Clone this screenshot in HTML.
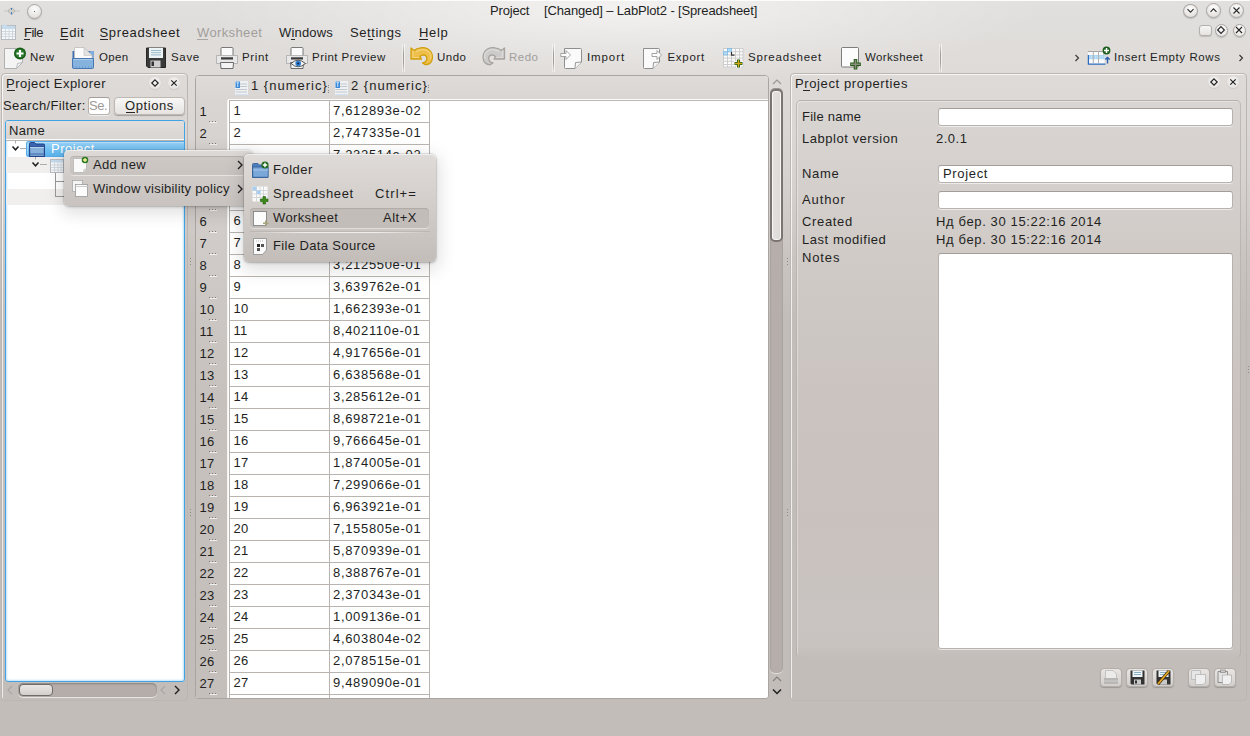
<!DOCTYPE html>
<html><head><meta charset="utf-8"><style>
html,body{margin:0;padding:0;width:1250px;height:736px;overflow:hidden}
body{position:relative;font-family:"Liberation Sans",sans-serif;
 background:radial-gradient(ellipse 420px 75px at 625px 8px,rgba(255,255,255,.6),rgba(255,255,255,.25) 55%,rgba(255,255,255,0) 100%),linear-gradient(to bottom,#e2e0de 0px,#e0dedc 22px,#dedad7 80px,#d7d3d0 172px,#c9c4c0 260px,#c2bdb9 322px,#c2bdb9 736px)}
.tx{position:absolute;white-space:pre;font-family:"Liberation Sans",sans-serif}
.a{position:absolute;box-sizing:border-box}
svg.a{overflow:visible}
.ul{position:absolute;height:1px;background:#2a2625}
.frame{position:absolute;box-sizing:border-box;border:1px solid #bbb6b2;border-radius:4px;box-shadow:inset 1px 1px 0 rgba(255,255,255,.75)}
.inp{position:absolute;box-sizing:border-box;background:#fff;border:1px solid #b7b2ae;border-top-color:#a29d99;border-radius:3px;box-shadow:0 1px 0 rgba(255,255,255,.6)}
.sep{position:absolute;top:44px;width:1px;height:28px;background:linear-gradient(to bottom,rgba(160,155,151,0),#a29d99 35%,#a29d99 65%,rgba(160,155,151,0));box-shadow:-1px 0 0 rgba(255,255,255,.45),1px 0 0 rgba(255,255,255,.6)}
.rbtn{position:absolute;border-radius:50%;box-sizing:border-box;background:radial-gradient(circle at 50% 30%,#fdfdfd 0,#efedeb 45%,#d9d5d2 100%);border:1px solid #a9a5a2;box-shadow:0 1px 1px rgba(0,0,0,.15)}
.cell{position:absolute;box-sizing:border-box;border-right:1px solid #bab5b1;border-bottom:1px solid #bab5b1;background:#fff}
.dots{position:absolute;width:7px;height:1px;background:repeating-linear-gradient(to right,#7e7976 0 1px,transparent 1px 3px);box-shadow:1px 1px 0 rgba(245,244,243,.9)}

</style></head><body>
<!-- title bar -->
<div class="a" style="left:0;top:0;width:1250px;height:1px;background:#fcfcfc"></div>
<svg class="a" style="left:3px;top:5px" width="18" height="12" viewBox="0 0 18 12"><path d="M1 6H17" stroke="#c3c6c8" stroke-width="1"/><path d="M5 6Q8.5 0 12 6Q8.5 12 5 6Z" fill="none" stroke="#aeb3b8" stroke-width="0.9"/><path d="M8.5 3V5M8.5 7V9.5" stroke="#3f7fc0" stroke-width="1.1"/><path d="M6.8 4.5V7.5M10.2 4.5V7.5" stroke="#d4c49a" stroke-width="0.7"/></svg>
<div class="rbtn" style="left:27px;top:4px;width:15px;height:15px"></div>
<div class="a" style="left:33.6px;top:10.5px;width:1.6px;height:1.6px;background:#333;border-radius:1px"></div>
<div class="rbtn" style="left:1183px;top:3.5px;width:15px;height:14.5px"></div>
<div class="rbtn" style="left:1206px;top:3px;width:15px;height:15px"></div>
<div class="rbtn" style="left:1229px;top:3px;width:15px;height:15px"></div>
<svg class="a" style="left:1183px;top:3px" width="15" height="15" viewBox="0 0 15 15"><path d="M4.5 6.2L7.5 9.2L10.5 6.2" stroke="#2b2b2b" stroke-width="1.1" fill="none"/></svg>
<svg class="a" style="left:1206px;top:3px" width="15" height="15" viewBox="0 0 15 15"><path d="M4.5 8.8L7.5 5.8L10.5 8.8" stroke="#2b2b2b" stroke-width="1.1" fill="none"/></svg>
<svg class="a" style="left:1229px;top:3px" width="15" height="15" viewBox="0 0 15 15"><path d="M4.5 4.5L10.5 10.5M10.5 4.5L4.5 10.5" stroke="#2b2b2b" stroke-width="1.1" fill="none"/></svg>
<!-- menubar -->
<svg class="a" style="left:1px;top:24px" width="16" height="17" viewBox="0 0 16 17"><rect x="0.5" y="1.5" width="14" height="14" fill="#f6f8fa" stroke="#b8bcc0"/><rect x="1" y="2" width="13" height="3" fill="#c5dbee"/><rect x="1" y="0.8" width="5" height="1.5" fill="#c5dbee"/><path d="M1 7.5H14M1 10H14M1 12.5H14M4.5 5V15M8 5V15M11.5 5V15" stroke="#c9d2da" stroke-width="0.8"/></svg>
<div class="ul" style="left:24px;top:39px;width:6px"></div>
<div class="ul" style="left:60px;top:39px;width:8px"></div>
<div class="ul" style="left:100px;top:39px;width:8px"></div>
<div class="ul" style="left:197px;top:39px;width:11px;background:#a9a5a2"></div>
<div class="ul" style="left:291px;top:39px;width:4px"></div>
<div class="ul" style="left:368px;top:39px;width:5px"></div>
<div class="ul" style="left:419px;top:39px;width:9px"></div>
<div class="a" style="left:1199px;top:24.5px;width:12.5px;height:11px;border-radius:3px;background:linear-gradient(#f7f6f5,#e6e3e1);border:1px solid #b3afac;box-shadow:0 1px 1px rgba(0,0,0,.15)"></div>
<div class="rbtn" style="left:1214.5px;top:23.5px;width:13px;height:13px;background:radial-gradient(circle at 50% 35%,#fdfdfd,#ebe9e7 70%,#dcd8d5)"></div>
<div class="rbtn" style="left:1232.5px;top:23.5px;width:13px;height:13px;background:radial-gradient(circle at 50% 35%,#fdfdfd,#ebe9e7 70%,#dcd8d5)"></div>
<svg class="a" style="left:1215px;top:24px" width="12" height="12" viewBox="0 0 12 12"><path d="M6 2.6L9.4 6L6 9.4L2.6 6Z" stroke="#222" stroke-width="1.1" fill="none"/></svg>
<svg class="a" style="left:1233px;top:24px" width="12" height="12" viewBox="0 0 12 12"><path d="M3 3L9 9M9 3L3 9" stroke="#222" stroke-width="1.1"/></svg>

<!-- toolbar -->
<!-- New -->
<svg class="a" style="left:4px;top:47px" width="23" height="23" viewBox="0 0 23 23">
<path d="M0.5 1.5H12.5L18.5 7.5V15.5L12.5 21.5H0.5Z" fill="#f4f4f4" stroke="#b0b0b0"/>
<path d="M12.5 21.5L13.5 16.5L18.5 15.5Z" fill="#f2f2f2" stroke="#b0b0b0" stroke-width="0.8"/>
<circle cx="16" cy="6.5" r="6" fill="#175c17"/><circle cx="16" cy="6.5" r="4.6" fill="#2a7a2a"/>
<path d="M16 3V10M12.5 6.5H19.5" stroke="#fff" stroke-width="2.2"/>
</svg>
<!-- Open -->
<svg class="a" style="left:72px;top:47px" width="22" height="22" viewBox="0 0 22 22">
<rect x="0.5" y="4" width="21" height="8" fill="#3e6fb0"/>
<rect x="18" y="4" width="3.5" height="8" fill="#7eaee0"/>
<path d="M2.5 0.5H12L20 8.5V12H2.5Z" fill="#fbfbfb" stroke="#bdbdbd" stroke-width="0.8"/>
<path d="M12 0.5V8.5H20Z" fill="#e3e3e3" stroke="#bdbdbd" stroke-width="0.6"/>
<path d="M0.5 11.5H21.5V20.5Q21.5 21.5 20.5 21.5H1.5Q0.5 21.5 0.5 20.5Z" fill="#86b3de" stroke="#4777b4"/>
<path d="M1.5 12.5H20.5" stroke="#a9cbec"/>
<path d="M1 20H21" stroke="#5b8ec8" stroke-dasharray="1 2"/>
</svg>
<!-- Save -->
<svg class="a" style="left:146px;top:47px" width="21" height="22" viewBox="0 0 21 22">
<path d="M0.5 1H19.5V20.5H2L0.5 19Z" fill="#3a3a3a" stroke="#262626"/>
<rect x="3" y="1" width="14" height="10" fill="#eef3f5"/>
<path d="M5 3.5H15M5 5.7H15M5 7.9H15" stroke="#8fb3c6" stroke-width="0.9"/>
<rect x="4.5" y="13.5" width="10" height="7" fill="#cfcfcf"/>
<rect x="5.5" y="14.5" width="2.5" height="4.5" fill="#333"/>
</svg>
<!-- Print -->
<svg class="a" style="left:216px;top:47px" width="22" height="22" viewBox="0 0 22 22">
<rect x="5" y="0.5" width="12" height="9" rx="1" fill="#fbfbfb" stroke="#6c6c6c" stroke-width="0.9"/>
<path d="M0.5 8.5H21.5V16.5H0.5Z" fill="#e7e7e7" stroke="#aaa" stroke-width="0.8"/>
<rect x="5" y="10.3" width="12" height="2.2" fill="#3a3a3a"/>
<path d="M4.5 15.5H17.5L17 21.5H5Z" fill="#f4f4f4" stroke="#5d5d5d" stroke-width="0.9"/>
</svg>
<!-- Print preview -->
<svg class="a" style="left:286px;top:47px" width="22" height="22" viewBox="0 0 22 22">
<rect x="5" y="0.5" width="12" height="9" rx="1" fill="#fbfbfb" stroke="#6c6c6c" stroke-width="0.9"/>
<path d="M0.5 8.5H21.5V16.5H0.5Z" fill="#e7e7e7" stroke="#aaa" stroke-width="0.8"/>
<rect x="5" y="10.3" width="12" height="2.2" fill="#3a3a3a"/>
<path d="M4.5 15.5H17.5L17 21.5H5Z" fill="#f4f4f4" stroke="#5d5d5d" stroke-width="0.9"/>
<path d="M5 16.5Q12 10 19.5 16.5Q12 23 5 16.5Z" fill="#f2f2f2" stroke="#444" stroke-width="0.9"/>
<circle cx="12.2" cy="16.5" r="2.8" fill="#2f7fd0"/><circle cx="12.2" cy="16.5" r="1.1" fill="#102a50"/>
</svg>
<div class="sep" style="left:403px"></div>
<!-- Undo -->
<svg class="a" style="left:410px;top:46px" width="24" height="20" viewBox="0 0 24 20">
<path d="M1 2L4 4.5C7.5 1.5 13.5 0.8 18 3C22.5 5.5 23.5 11.5 21.5 15.5C20 18 17.5 19 15 18.5L12.5 17C15 16.5 16.5 15 16.8 12.8C17 10.5 15.5 9 13.5 9C12 9 11 9.5 10 10.5L11.5 13L1 13Z" fill="#eebf4a" stroke="#d09f0c" stroke-width="1.3" stroke-linejoin="round"/>
<path d="M3 4.5L3 11.5L9 11.5M6 6C9 3.5 14 2.8 17.5 4.8C20.5 6.5 21.5 10 20.5 13" stroke="#f5d27a" stroke-width="1.2" fill="none"/>
</svg>
<!-- Redo -->
<svg class="a" style="left:482px;top:46px" width="24" height="20" viewBox="0 0 24 20">
<g transform="translate(23.5,0) scale(-1,1)">
<path d="M1 2L4 4.5C7.5 1.5 13.5 0.8 18 3C22.5 5.5 23.5 11.5 21.5 15.5C20 18 17.5 19 15 18.5L12.5 17C15 16.5 16.5 15 16.8 12.8C17 10.5 15.5 9 13.5 9C12 9 11 9.5 10 10.5L11.5 13L1 13Z" fill="#cdcbc9" stroke="#a6a3a0" stroke-width="1.3" stroke-linejoin="round"/>
<path d="M3 4.5L3 11.5L9 11.5M6 6C9 3.5 14 2.8 17.5 4.8C20.5 6.5 21.5 10 20.5 13" stroke="#dddbd9" stroke-width="1.2" fill="none"/>
</g>
</svg>
<div class="sep" style="left:553px"></div>
<!-- Import -->
<svg class="a" style="left:560px;top:47px" width="23" height="23" viewBox="0 0 23 23">
<path d="M4.5 1.5H20.5Q21.5 1.5 21.5 2.5V15L15 21.5H5.5Q4.5 21.5 4.5 20.5Z" fill="#fafafa" stroke="#8e8e8e" stroke-width="1"/>
<path d="M15 21.5L15.5 15.5L21.5 15" fill="#f4f4f4" stroke="#8e8e8e" stroke-width="0.9"/>
<path d="M0.8 6.5H6V3.5L10.5 8L6 12.5V9.5H0.8Z" fill="#fdfdfd" stroke="#9a9a9a" stroke-width="0.9"/>
</svg>
<!-- Export -->
<svg class="a" style="left:642px;top:47px" width="23" height="23" viewBox="0 0 23 23">
<path d="M1.5 1.5H16.5Q17.5 1.5 17.5 2.5V15L11 21.5H2.5Q1.5 21.5 1.5 20.5Z" fill="#fafafa" stroke="#8e8e8e" stroke-width="1"/>
<path d="M11 21.5L11.5 15.5L17.5 15" fill="#f4f4f4" stroke="#8e8e8e" stroke-width="0.9"/>
<path d="M10 6.5H15V3.5L19.5 8L15 12.5V9.5H10Z" fill="#fdfdfd" stroke="#9a9a9a" stroke-width="0.9"/>
</svg>
<!-- Spreadsheet -->
<svg class="a" style="left:722px;top:47px" width="23" height="23" viewBox="0 0 23 23">
<rect x="1" y="1" width="20" height="19" fill="#fbfbfb"/>
<path d="M1.5 1V20M5.5 1V20M9.5 1V20M13.5 1V20M17.5 1V20M21 1V20M1 1.5H21M1 4.7H21M1 7.9H21M1 11.1H21M1 14.3H21M1 17.5H21M1 20H21" stroke="#cdcdcd" stroke-width="1"/>
<rect x="5.5" y="1.5" width="4" height="3.2" fill="#b3dcf5" stroke="#86bde6" stroke-width="0.9"/>
<rect x="1.5" y="4.7" width="4" height="3.2" fill="#b3dcf5" stroke="#86bde6" stroke-width="0.9"/>
<path d="M9.5 5V8.2H12.5" stroke="#333" stroke-width="1.2" fill="none"/>
<path d="M16.5 12V21M12 16.5H21" stroke="#fff" stroke-width="5"/>
<path d="M16.5 12.5V20.5M12.5 16.5H20.5" stroke="#1f5a10" stroke-width="3.2"/>
<path d="M16.5 13V20M13 16.5H20" stroke="#d4a818" stroke-width="1.3"/>
</svg>
<!-- Worksheet -->
<svg class="a" style="left:841px;top:47px" width="23" height="23" viewBox="0 0 23 23">
<rect x="0.5" y="0.5" width="17" height="19.5" rx="1" fill="#fcfcfc" stroke="#6f6f6f" stroke-width="0.9"/>
<path d="M14.5 12V22.5M9.2 17.3H19.8" stroke="#1f5a10" stroke-width="3.6"/>
<path d="M14.5 12.8V21.7M10 17.3H19" stroke="#8d8d80" stroke-width="1.6"/>
</svg>
<div class="sep" style="left:940px"></div>
<svg class="a" style="left:1074px;top:54px" width="6" height="8" viewBox="0 0 6 8"><path d="M1.5 1L4.5 4L1.5 7" stroke="#333" stroke-width="1.1" fill="none"/></svg>
<!-- Insert empty rows -->
<svg class="a" style="left:1087px;top:46px" width="24" height="20" viewBox="0 0 24 20">
<rect x="1" y="5" width="16.5" height="13" fill="#fbfbfb"/>
<rect x="1" y="9" width="17.5" height="4.2" fill="#a6d3f1"/>
<path d="M1.5 10.2H18M1.5 12H18" stroke="#eaf5fc" stroke-width="0.8" stroke-dasharray="1.2 1"/>
<path d="M1 5.5H17.5" stroke="#a3a3a3" stroke-width="1"/>
<path d="M6.3 5.5V17M11.5 5.5V17M16.8 5.5V9" stroke="#b0b0b0" stroke-width="1"/>
<path d="M1.4 9V18.2H18.5" stroke="#2d6cc0" stroke-width="1.3" fill="none"/>
<path d="M20.5 17.5V11.5M18.3 13.6L20.5 11.4L22.7 13.6" stroke="#2a5fb0" stroke-width="1.4" fill="none"/>
<circle cx="19.5" cy="4.5" r="3.9" fill="#1d5e1d"/>
<path d="M19.5 2V7M17 4.5H22" stroke="#fff" stroke-width="1.5"/>
</svg>
<svg class="a" style="left:1238px;top:54px" width="6" height="8" viewBox="0 0 6 8"><path d="M1.5 1L4.5 4L1.5 7" stroke="#333" stroke-width="1.1" fill="none"/></svg>

<!-- left dock -->
<div class="frame" style="left:1px;top:73px;width:187px;height:628px"></div>
<div class="ul" style="left:7px;top:90px;width:8px"></div>
<div class="rbtn" style="left:149px;top:77px;width:12px;height:12px;background:radial-gradient(circle at 50% 40%,#f6f5f4,#e6e3e1 70%,#d9d5d2);border:none;box-shadow:0 1px 1px rgba(0,0,0,.08)"></div>
<div class="rbtn" style="left:168px;top:77px;width:12px;height:12px;background:radial-gradient(circle at 50% 40%,#f6f5f4,#e6e3e1 70%,#d9d5d2);border:none;box-shadow:0 1px 1px rgba(0,0,0,.08)"></div>
<svg class="a" style="left:149px;top:77px" width="12" height="12" viewBox="0 0 12 12"><path d="M6 2.8L9.2 6L6 9.2L2.8 6Z" stroke="#222" stroke-width="1.2" fill="none"/></svg>
<svg class="a" style="left:168px;top:77px" width="12" height="12" viewBox="0 0 12 12"><path d="M3.3 3.3L8.7 8.7M8.7 3.3L3.3 8.7" stroke="#222" stroke-width="1.2"/></svg>
<div class="inp" style="left:87.5px;top:97px;width:22.5px;height:17.5px"></div>
<div class="a" style="left:114px;top:97px;width:71px;height:17.5px;border-radius:4px;background:linear-gradient(#f9f8f7,#e6e3e1);border:1px solid #bdb8b4;box-shadow:0 1px 1px rgba(0,0,0,.25)"></div>
<div class="ul" style="left:126px;top:112px;width:9px"></div>
<!-- tree view -->
<div class="a" style="left:5px;top:120px;width:180px;height:562px;border:1px solid #3fa3e6;border-radius:3px;background:#fff;box-shadow:inset 0 0 2px 1px rgba(80,170,235,.35)"></div>
<div class="a" style="left:6px;top:121px;width:178px;height:18px;background:linear-gradient(#e1dedb,#d8d4d1);border-radius:2px 2px 0 0"></div>
<div class="a" style="left:6px;top:139px;width:178px;height:1px;background:#fbfbfb"></div>
<div class="a" style="left:6px;top:140px;width:178px;height:1px;background:#bab5b1"></div>
<div class="a" style="left:6px;top:157px;width:178px;height:16px;background:#f0efee"></div>
<div class="a" style="left:6px;top:189px;width:178px;height:16px;background:#f0efee"></div>
<!-- selection -->
<div class="a" style="left:26px;top:141px;width:158px;height:16px;border-radius:3px 0 0 3px;background:linear-gradient(#9ad3f6,#6cbdf0 60%,#5cb3ec);border:1px solid #56ace8;border-right:none;box-shadow:inset 1px 1px 0 rgba(255,255,255,.3)"></div>
<!-- tree lines -->
<svg class="a" style="left:6px;top:140px" width="80" height="70" viewBox="0 0 80 70">
<path d="M6.5 6.5L9.5 9.8L12.5 6.5" stroke="#1f1f1f" stroke-width="1.5" fill="none"/>
<path d="M9.5 0V3.5M14 8.5H20" stroke="#b0acaa" stroke-width="1"/>
<path d="M26.5 22.5L29.5 25.8L32.5 22.5" stroke="#1f1f1f" stroke-width="1.5" fill="none"/>
<path d="M29.5 17V19.5M34 24.5H41" stroke="#b0acaa" stroke-width="1"/>
<path d="M49.5 32V57M49.5 32.5H58M49.5 41.5H58M49.5 56.5H58" stroke="#9a9a9a" stroke-width="1"/>
</svg>
<!-- folder icon in tree -->
<svg class="a" style="left:29px;top:142px" width="16" height="15" viewBox="0 0 16 15">
<path d="M0.5 1.5Q0.5 0.5 1.5 0.5H5.5L7 2H14.5Q15.5 2 15.5 3V14.5H0.5Z" fill="#3a64b0" stroke="#1d3d85" stroke-width="0.9"/>
<rect x="0.7" y="4.5" width="14.6" height="9.8" fill="#86b0d9" stroke="#1d3d85" stroke-width="0.9"/>
<path d="M1 5.4H15" stroke="#b7d8f2" stroke-width="1"/>
<path d="M1 12H15" stroke="#3d68ad" stroke-width="1"/>
</svg>
<!-- spreadsheet icon in tree -->
<svg class="a" style="left:50px;top:158px" width="14" height="15" viewBox="0 0 14 15"><rect x="0.5" y="1.5" width="13" height="13" fill="#f6f8fa" stroke="#b8bcc0"/><rect x="1" y="2" width="12" height="2.5" fill="#c5dbee"/><path d="M1 7H13M1 9.5H13M1 12H13M4.5 4.5V14M8 4.5V14M11 4.5V14" stroke="#c9d2da" stroke-width="0.8"/></svg>
<!-- h scrollbar -->
<svg class="a" style="left:6px;top:685px" width="8" height="10" viewBox="0 0 8 10"><path d="M6 1L2 5L6 9" stroke="#aaa6a3" stroke-width="1.2" fill="none"/></svg>
<div class="a" style="left:18px;top:683px;width:139px;height:14px;border-radius:5px;background:#b4adaa;box-shadow:inset 0 1px 2px rgba(0,0,0,.25),0 1px 0 rgba(255,255,255,.6)"></div>
<div class="a" style="left:19px;top:684px;width:34px;height:12px;border-radius:4px;background:linear-gradient(#e9e7e5,#d2cecb);border:1px solid #6f6b69"></div>
<svg class="a" style="left:159px;top:685px" width="8" height="10" viewBox="0 0 8 10"><path d="M6 1L2 5L6 9" stroke="#aaa6a3" stroke-width="1.2" fill="none"/></svg>
<svg class="a" style="left:173px;top:685px" width="8" height="10" viewBox="0 0 8 10"><path d="M2 1L6 5L2 9" stroke="#1f1f1f" stroke-width="1.4" fill="none"/></svg>
<!-- splitter dots -->
<div class="a" style="left:190px;top:258px;width:1px;height:9px;background:repeating-linear-gradient(#8f8a87 0 1px,transparent 1px 3px)"></div>
<div class="a" style="left:190px;top:509px;width:1px;height:9px;background:repeating-linear-gradient(#8f8a87 0 1px,transparent 1px 3px)"></div>
<div class="a" style="left:787px;top:258px;width:1px;height:9px;background:repeating-linear-gradient(#8f8a87 0 1px,transparent 1px 3px)"></div>
<div class="a" style="left:787px;top:509px;width:1px;height:9px;background:repeating-linear-gradient(#8f8a87 0 1px,transparent 1px 3px)"></div>
<div class="a" style="left:1248px;top:366px;width:1px;height:9px;background:repeating-linear-gradient(#8f8a87 0 1px,transparent 1px 3px)"></div>

<!-- spreadsheet -->
<div class="a" style="left:195px;top:75px;width:574px;height:624px;border:1px solid #aaa5a1;border-radius:4px 4px 3px 3px;background:#fff;overflow:hidden">
<div class="a" style="left:0;top:0;width:572px;height:24px;background:linear-gradient(#dedbd8,#d9d5d2)"></div>
<div class="a" style="left:32px;top:23px;width:541px;height:1px;background:#fbfbfb"></div>
<div class="a" style="left:0;top:24px;width:32px;height:600px;background:linear-gradient(#d9d5d2,#c6c1bd 300px,#c4bfbb 600px);border-right:1px solid #f4f3f2"></div>
<div class="a" style="left:33px;top:24px;width:540px;height:1px;background:#bdb8b4"></div>
<div class="a" style="left:33px;top:24px;width:101px;height:23px;border:1px solid #b9b4b0"></div>
<div class="a" style="left:133px;top:24px;width:101px;height:23px;border:1px solid #b9b4b0"></div>
<div class="dots" style="left:13px;top:45px"></div>
<div class="a" style="left:33px;top:46px;width:101px;height:23px;border:1px solid #b9b4b0"></div>
<div class="a" style="left:133px;top:46px;width:101px;height:23px;border:1px solid #b9b4b0"></div>
<div class="dots" style="left:13px;top:67px"></div>
<div class="a" style="left:33px;top:68px;width:101px;height:23px;border:1px solid #b9b4b0"></div>
<div class="a" style="left:133px;top:68px;width:101px;height:23px;border:1px solid #b9b4b0"></div>
<div class="dots" style="left:13px;top:89px"></div>
<div class="a" style="left:33px;top:90px;width:101px;height:23px;border:1px solid #b9b4b0"></div>
<div class="a" style="left:133px;top:90px;width:101px;height:23px;border:1px solid #b9b4b0"></div>
<div class="dots" style="left:13px;top:111px"></div>
<div class="a" style="left:33px;top:112px;width:101px;height:23px;border:1px solid #b9b4b0"></div>
<div class="a" style="left:133px;top:112px;width:101px;height:23px;border:1px solid #b9b4b0"></div>
<div class="dots" style="left:13px;top:133px"></div>
<div class="a" style="left:33px;top:134px;width:101px;height:23px;border:1px solid #b9b4b0"></div>
<div class="a" style="left:133px;top:134px;width:101px;height:23px;border:1px solid #b9b4b0"></div>
<div class="dots" style="left:13px;top:155px"></div>
<div class="a" style="left:33px;top:156px;width:101px;height:23px;border:1px solid #b9b4b0"></div>
<div class="a" style="left:133px;top:156px;width:101px;height:23px;border:1px solid #b9b4b0"></div>
<div class="dots" style="left:13px;top:177px"></div>
<div class="a" style="left:33px;top:178px;width:101px;height:23px;border:1px solid #b9b4b0"></div>
<div class="a" style="left:133px;top:178px;width:101px;height:23px;border:1px solid #b9b4b0"></div>
<div class="dots" style="left:13px;top:199px"></div>
<div class="a" style="left:33px;top:200px;width:101px;height:23px;border:1px solid #b9b4b0"></div>
<div class="a" style="left:133px;top:200px;width:101px;height:23px;border:1px solid #b9b4b0"></div>
<div class="dots" style="left:13px;top:221px"></div>
<div class="a" style="left:33px;top:222px;width:101px;height:23px;border:1px solid #b9b4b0"></div>
<div class="a" style="left:133px;top:222px;width:101px;height:23px;border:1px solid #b9b4b0"></div>
<div class="dots" style="left:13px;top:243px"></div>
<div class="a" style="left:33px;top:244px;width:101px;height:23px;border:1px solid #b9b4b0"></div>
<div class="a" style="left:133px;top:244px;width:101px;height:23px;border:1px solid #b9b4b0"></div>
<div class="dots" style="left:13px;top:265px"></div>
<div class="a" style="left:33px;top:266px;width:101px;height:23px;border:1px solid #b9b4b0"></div>
<div class="a" style="left:133px;top:266px;width:101px;height:23px;border:1px solid #b9b4b0"></div>
<div class="dots" style="left:13px;top:287px"></div>
<div class="a" style="left:33px;top:288px;width:101px;height:23px;border:1px solid #b9b4b0"></div>
<div class="a" style="left:133px;top:288px;width:101px;height:23px;border:1px solid #b9b4b0"></div>
<div class="dots" style="left:13px;top:309px"></div>
<div class="a" style="left:33px;top:310px;width:101px;height:23px;border:1px solid #b9b4b0"></div>
<div class="a" style="left:133px;top:310px;width:101px;height:23px;border:1px solid #b9b4b0"></div>
<div class="dots" style="left:13px;top:331px"></div>
<div class="a" style="left:33px;top:332px;width:101px;height:23px;border:1px solid #b9b4b0"></div>
<div class="a" style="left:133px;top:332px;width:101px;height:23px;border:1px solid #b9b4b0"></div>
<div class="dots" style="left:13px;top:353px"></div>
<div class="a" style="left:33px;top:354px;width:101px;height:23px;border:1px solid #b9b4b0"></div>
<div class="a" style="left:133px;top:354px;width:101px;height:23px;border:1px solid #b9b4b0"></div>
<div class="dots" style="left:13px;top:375px"></div>
<div class="a" style="left:33px;top:376px;width:101px;height:23px;border:1px solid #b9b4b0"></div>
<div class="a" style="left:133px;top:376px;width:101px;height:23px;border:1px solid #b9b4b0"></div>
<div class="dots" style="left:13px;top:397px"></div>
<div class="a" style="left:33px;top:398px;width:101px;height:23px;border:1px solid #b9b4b0"></div>
<div class="a" style="left:133px;top:398px;width:101px;height:23px;border:1px solid #b9b4b0"></div>
<div class="dots" style="left:13px;top:419px"></div>
<div class="a" style="left:33px;top:420px;width:101px;height:23px;border:1px solid #b9b4b0"></div>
<div class="a" style="left:133px;top:420px;width:101px;height:23px;border:1px solid #b9b4b0"></div>
<div class="dots" style="left:13px;top:441px"></div>
<div class="a" style="left:33px;top:442px;width:101px;height:23px;border:1px solid #b9b4b0"></div>
<div class="a" style="left:133px;top:442px;width:101px;height:23px;border:1px solid #b9b4b0"></div>
<div class="dots" style="left:13px;top:463px"></div>
<div class="a" style="left:33px;top:464px;width:101px;height:23px;border:1px solid #b9b4b0"></div>
<div class="a" style="left:133px;top:464px;width:101px;height:23px;border:1px solid #b9b4b0"></div>
<div class="dots" style="left:13px;top:485px"></div>
<div class="a" style="left:33px;top:486px;width:101px;height:23px;border:1px solid #b9b4b0"></div>
<div class="a" style="left:133px;top:486px;width:101px;height:23px;border:1px solid #b9b4b0"></div>
<div class="dots" style="left:13px;top:507px"></div>
<div class="a" style="left:33px;top:508px;width:101px;height:23px;border:1px solid #b9b4b0"></div>
<div class="a" style="left:133px;top:508px;width:101px;height:23px;border:1px solid #b9b4b0"></div>
<div class="dots" style="left:13px;top:529px"></div>
<div class="a" style="left:33px;top:530px;width:101px;height:23px;border:1px solid #b9b4b0"></div>
<div class="a" style="left:133px;top:530px;width:101px;height:23px;border:1px solid #b9b4b0"></div>
<div class="dots" style="left:13px;top:551px"></div>
<div class="a" style="left:33px;top:552px;width:101px;height:23px;border:1px solid #b9b4b0"></div>
<div class="a" style="left:133px;top:552px;width:101px;height:23px;border:1px solid #b9b4b0"></div>
<div class="dots" style="left:13px;top:573px"></div>
<div class="a" style="left:33px;top:574px;width:101px;height:23px;border:1px solid #b9b4b0"></div>
<div class="a" style="left:133px;top:574px;width:101px;height:23px;border:1px solid #b9b4b0"></div>
<div class="dots" style="left:13px;top:595px"></div>
<div class="a" style="left:33px;top:596px;width:101px;height:23px;border:1px solid #b9b4b0"></div>
<div class="a" style="left:133px;top:596px;width:101px;height:23px;border:1px solid #b9b4b0"></div>
<div class="dots" style="left:13px;top:617px"></div>
<div class="a" style="left:33px;top:618px;width:101px;height:23px;border:1px solid #b9b4b0"></div>
<div class="a" style="left:133px;top:618px;width:101px;height:23px;border:1px solid #b9b4b0"></div>
<div class="dots" style="left:13px;top:639px"></div>
</div>
<svg class="a" style="left:235px;top:81px" width="13" height="14" viewBox="0 0 13 14"><rect x="0" y="0" width="13" height="14" fill="#eef1f4"/><path d="M5 3H12M5 5.5H12M0.5 8.5H12M0.5 11H12" stroke="#c3c8cd" stroke-width="1.2"/><rect x="0.5" y="0.5" width="4.5" height="6.5" fill="#3d8ad6"/><path d="M1.5 1.7H4M2.75 1.7V6" stroke="#d9ecff" stroke-width="0.9"/><path d="M0.5 13.5H12.5" stroke="#cfe3f5"/></svg>
<svg class="a" style="left:335px;top:81px" width="13" height="14" viewBox="0 0 13 14"><rect x="0" y="0" width="13" height="14" fill="#eef1f4"/><path d="M5 3H12M5 5.5H12M0.5 8.5H12M0.5 11H12" stroke="#c3c8cd" stroke-width="1.2"/><rect x="0.5" y="0.5" width="4.5" height="6.5" fill="#3d8ad6"/><path d="M1.5 1.7H4M2.75 1.7V6" stroke="#d9ecff" stroke-width="0.9"/><path d="M0.5 13.5H12.5" stroke="#cfe3f5"/></svg>
<div class="a" style="left:328px;top:85px;width:1px;height:8px;background:repeating-linear-gradient(#8f8a87 0 1px,transparent 1px 2.5px)"></div>
<div class="a" style="left:428px;top:85px;width:1px;height:8px;background:repeating-linear-gradient(#8f8a87 0 1px,transparent 1px 2.5px)"></div>
<svg class="a" style="left:771px;top:77px" width="12" height="9" viewBox="0 0 12 9"><path d="M2 7L6 3L10 7" stroke="#9b9794" stroke-width="1.2" fill="none"/></svg>
<div class="a" style="left:770px;top:88px;width:13px;height:585px;border-radius:5px;background:#b5aeab;box-shadow:inset 0 1px 2px rgba(0,0,0,.2),0 1px 0 rgba(255,255,255,.5)"></div>
<div class="a" style="left:770px;top:89px;width:13px;height:153px;border-radius:5px;background:linear-gradient(to right,#e4e1df,#dcd9d6);border:2px solid #7a7572;box-shadow:inset 0 0 0 1px #f7f6f5"></div>
<svg class="a" style="left:771px;top:674px" width="12" height="9" viewBox="0 0 12 9"><path d="M2 7L6 3L10 7" stroke="#84807d" stroke-width="1.2" fill="none"/></svg>
<svg class="a" style="left:771px;top:687px" width="12" height="9" viewBox="0 0 12 9"><path d="M2 2.5L6 6.5L10 2.5" stroke="#1f1f1f" stroke-width="1.5" fill="none"/></svg>
<!-- right dock -->
<div class="frame" style="left:790px;top:73px;width:457px;height:628px"></div>
<div class="ul" style="left:803px;top:90px;width:7px"></div>
<div class="rbtn" style="left:1208px;top:76px;width:12px;height:12px;background:radial-gradient(circle at 50% 40%,#f6f5f4,#e6e3e1 70%,#d9d5d2);border:none;box-shadow:0 1px 1px rgba(0,0,0,.08)"></div>
<div class="rbtn" style="left:1227px;top:76px;width:12px;height:12px;background:radial-gradient(circle at 50% 40%,#f6f5f4,#e6e3e1 70%,#d9d5d2);border:none;box-shadow:0 1px 1px rgba(0,0,0,.08)"></div>
<svg class="a" style="left:1208px;top:76px" width="12" height="12" viewBox="0 0 12 12"><path d="M6 2.8L9.2 6L6 9.2L2.8 6Z" stroke="#222" stroke-width="1.2" fill="none"/></svg>
<svg class="a" style="left:1227px;top:76px" width="12" height="12" viewBox="0 0 12 12"><path d="M3.3 3.3L8.7 8.7M8.7 3.3L3.3 8.7" stroke="#222" stroke-width="1.2"/></svg>
<!-- inner group frame -->
<div class="a" style="left:796px;top:100px;width:445px;height:558px;border-radius:5px;border:1px solid rgba(170,165,161,.55);border-bottom:none;background:linear-gradient(#d9d5d2 0,#d0cbc7 150px,#cac3bf 300px,#c9c1be 420px,#c9c4c1 520px,#c8c3bf 545px,#c2bdb9 558px);box-shadow:inset 1px 1px 0 rgba(255,255,255,.35)"></div>
<div class="inp" style="left:938px;top:108px;width:295px;height:18px"></div>
<div class="inp" style="left:938px;top:165px;width:295px;height:17.5px"></div>
<div class="inp" style="left:938px;top:191px;width:295px;height:17.5px"></div>
<div class="inp" style="left:938px;top:253px;width:295px;height:396px"></div>
<!-- bottom buttons -->
<div class="a" style="left:1100px;top:668px;width:22px;height:19px;border-radius:4px;background:linear-gradient(#e8e5e3,#d3cfcc);border:1px solid #b3aeaa;box-shadow:0 1px 1px rgba(0,0,0,.2)"></div>
<div class="a" style="left:1126px;top:668px;width:22px;height:19px;border-radius:4px;background:linear-gradient(#e8e5e3,#d3cfcc);border:1px solid #b3aeaa;box-shadow:0 1px 1px rgba(0,0,0,.2)"></div>
<div class="a" style="left:1152px;top:668px;width:22px;height:19px;border-radius:4px;background:linear-gradient(#e8e5e3,#d3cfcc);border:1px solid #b3aeaa;box-shadow:0 1px 1px rgba(0,0,0,.2)"></div>
<div class="a" style="left:1188px;top:668px;width:22px;height:19px;border-radius:4px;background:linear-gradient(#e8e5e3,#d3cfcc);border:1px solid #b3aeaa;box-shadow:0 1px 1px rgba(0,0,0,.2)"></div>
<div class="a" style="left:1214px;top:668px;width:22px;height:19px;border-radius:4px;background:linear-gradient(#e8e5e3,#d3cfcc);border:1px solid #b3aeaa;box-shadow:0 1px 1px rgba(0,0,0,.2)"></div>
<svg class="a" style="left:1103px;top:670px" width="16" height="15" viewBox="0 0 16 15"><path d="M2.5 0.5H10L13.5 4V10H2.5Z" fill="#ebebeb" stroke="#b9b9b9" stroke-width="0.8"/><rect x="1" y="8" width="14" height="6" fill="#b9b7b5"/><path d="M1 11H15" stroke="#d0cecc"/></svg>
<svg class="a" style="left:1130px;top:670px" width="15" height="15" viewBox="0 0 15 15"><path d="M0.5 0.5H14.5V14.5H1.5L0.5 13.5Z" fill="#333" /><rect x="2.5" y="0.5" width="10" height="6.5" fill="#eef3f5"/><path d="M4 2.5H11M4 4.5H11" stroke="#7fa8bd" stroke-width="0.9"/><rect x="4" y="9.5" width="7" height="5" fill="#c9c9c9"/><rect x="5" y="10.5" width="2" height="3" fill="#333"/></svg>
<svg class="a" style="left:1156px;top:670px" width="15" height="15" viewBox="0 0 15 15"><path d="M0.5 0.5H14.5V14.5H1.5L0.5 13.5Z" fill="#333" /><rect x="2.5" y="0.5" width="10" height="6.5" fill="#eef3f5"/><path d="M4 2.5H11M4 4.5H11" stroke="#7fa8bd" stroke-width="0.9"/><rect x="4" y="9.5" width="7" height="5" fill="#c9c9c9"/><path d="M2 14L13 1" stroke="#3a2a10" stroke-width="3"/><path d="M2 14L13 1" stroke="#e8a823" stroke-width="1.8"/></svg>
<svg class="a" style="left:1191px;top:670px" width="15" height="15" viewBox="0 0 15 15"><path d="M0.5 0.5H9.5V9.5H0.5Z" fill="#e6e6e6" stroke="#b5b5b5" stroke-width="0.8"/><path d="M4.5 4.5H14.5V12L12 14.5H4.5Z" fill="#efefef" stroke="#b5b5b5" stroke-width="0.8"/></svg>
<svg class="a" style="left:1217px;top:669px" width="15" height="16" viewBox="0 0 15 16"><path d="M1 2.5H10.5V13.5H1Z" fill="#e2e2e2" stroke="#7a7a7a" stroke-width="0.8"/><rect x="3.5" y="1" width="5" height="2.5" fill="#ccc" stroke="#7a7a7a" stroke-width="0.6"/><path d="M5.5 6H14.5V13L12 15.5H5.5Z" fill="#f0f0f0" stroke="#b0b0b0" stroke-width="0.8"/></svg>

<span class="tx" style="left:490.00px;top:3px;font-size:13px;line-height:16px;color:#231f1e;letter-spacing:-0.167px;">Project</span><span class="tx" style="left:544.00px;top:3px;font-size:13px;line-height:16px;color:#231f1e;letter-spacing:-0.143px;">[Changed] – LabPlot2 - [Spreadsheet]</span><span class="tx" style="left:24.00px;top:25px;font-size:13px;line-height:16px;color:#231f1e;letter-spacing:-0.500px;">File</span><span class="tx" style="left:60.00px;top:25px;font-size:13px;line-height:16px;color:#231f1e;letter-spacing:0.500px;">Edit</span><span class="tx" style="left:99.50px;top:25px;font-size:13px;line-height:16px;color:#231f1e;letter-spacing:0.650px;">Spreadsheet</span><span class="tx" style="left:197.00px;top:25px;font-size:13px;line-height:16px;color:#a29e9b;letter-spacing:0.375px;">Worksheet</span><span class="tx" style="left:279.00px;top:25px;font-size:13px;line-height:16px;color:#231f1e;letter-spacing:0.167px;">Windows</span><span class="tx" style="left:350.00px;top:25px;font-size:13px;line-height:16px;color:#231f1e;letter-spacing:0.571px;">Settings</span><span class="tx" style="left:419.00px;top:25px;font-size:13px;line-height:16px;color:#231f1e;letter-spacing:0.667px;">Help</span><span class="tx" style="left:30.00px;top:50px;font-size:11.5px;line-height:14px;color:#231f1e;letter-spacing:0.500px;">New</span><span class="tx" style="left:99.00px;top:50px;font-size:11.5px;line-height:14px;color:#231f1e;letter-spacing:0.333px;">Open</span><span class="tx" style="left:171.00px;top:50px;font-size:11.5px;line-height:14px;color:#231f1e;letter-spacing:0.667px;">Save</span><span class="tx" style="left:242.00px;top:50px;font-size:11.5px;line-height:14px;color:#231f1e;letter-spacing:0.625px;">Print</span><span class="tx" style="left:312.00px;top:50px;font-size:11.5px;line-height:14px;color:#231f1e;letter-spacing:0.458px;">Print Preview</span><span class="tx" style="left:437.00px;top:50px;font-size:11.5px;line-height:14px;color:#231f1e;letter-spacing:0.500px;">Undo</span><span class="tx" style="left:509.00px;top:50px;font-size:11.5px;line-height:14px;color:#a29e9b;letter-spacing:0.500px;">Redo</span><span class="tx" style="left:587.00px;top:50px;font-size:11.5px;line-height:14px;color:#231f1e;letter-spacing:0.900px;">Import</span><span class="tx" style="left:667.50px;top:50px;font-size:11.5px;line-height:14px;color:#231f1e;letter-spacing:0.700px;">Export</span><span class="tx" style="left:748.00px;top:50px;font-size:11.5px;line-height:14px;color:#231f1e;letter-spacing:0.800px;">Spreadsheet</span><span class="tx" style="left:865.00px;top:50px;font-size:11.5px;line-height:14px;color:#231f1e;letter-spacing:0.375px;">Worksheet</span><span class="tx" style="left:1114.00px;top:50px;font-size:11.5px;line-height:14px;color:#231f1e;letter-spacing:0.594px;">Insert Empty Rows</span><span class="tx" style="left:6.00px;top:76px;font-size:13px;line-height:16px;color:#231f1e;letter-spacing:0.467px;">Project Explorer</span><span class="tx" style="left:3.00px;top:98px;font-size:13px;line-height:16px;color:#231f1e;letter-spacing:0.385px;">Search/Filter:</span><span class="tx" style="left:89.00px;top:98px;font-size:13px;line-height:16px;color:#9d9996;letter-spacing:-0.500px;">Se.</span><span class="tx" style="left:125.00px;top:98px;font-size:13px;line-height:16px;color:#231f1e;letter-spacing:0.583px;">Options</span><span class="tx" style="left:9.00px;top:123px;font-size:13px;line-height:16px;color:#231f1e;letter-spacing:0.333px;">Name</span><span class="tx" style="left:51.00px;top:141px;font-size:13px;line-height:16px;color:#ffffff;letter-spacing:0.500px;">Project</span><span class="tx" style="left:251.00px;top:78px;font-size:13px;line-height:16px;color:#231f1e;letter-spacing:1.000px;">1 {numeric}</span><span class="tx" style="left:351.00px;top:78px;font-size:13px;line-height:16px;color:#231f1e;letter-spacing:1.000px;">2 {numeric}</span><span class="tx" style="left:199.50px;top:104px;font-size:13px;line-height:16px;color:#231f1e;letter-spacing:0.350px;">1</span><span class="tx" style="left:233.50px;top:103px;font-size:13px;line-height:16px;color:#231f1e;letter-spacing:0.350px;">1</span><span class="tx" style="left:333.00px;top:103px;font-size:13px;line-height:16px;color:#231f1e;letter-spacing:0.673px;">7,612893e-02</span><span class="tx" style="left:199.50px;top:126px;font-size:13px;line-height:16px;color:#231f1e;letter-spacing:0.350px;">2</span><span class="tx" style="left:233.50px;top:125px;font-size:13px;line-height:16px;color:#231f1e;letter-spacing:0.350px;">2</span><span class="tx" style="left:333.00px;top:125px;font-size:13px;line-height:16px;color:#231f1e;letter-spacing:0.673px;">2,747335e-01</span><span class="tx" style="left:199.50px;top:148px;font-size:13px;line-height:16px;color:#231f1e;letter-spacing:0.350px;">3</span><span class="tx" style="left:233.50px;top:147px;font-size:13px;line-height:16px;color:#231f1e;letter-spacing:0.350px;">3</span><span class="tx" style="left:333.00px;top:147px;font-size:13px;line-height:16px;color:#231f1e;letter-spacing:0.673px;">7,232514e-02</span><span class="tx" style="left:199.50px;top:170px;font-size:13px;line-height:16px;color:#231f1e;letter-spacing:0.350px;">4</span><span class="tx" style="left:233.50px;top:169px;font-size:13px;line-height:16px;color:#231f1e;letter-spacing:0.350px;">4</span><span class="tx" style="left:199.50px;top:192px;font-size:13px;line-height:16px;color:#231f1e;letter-spacing:0.350px;">5</span><span class="tx" style="left:233.50px;top:191px;font-size:13px;line-height:16px;color:#231f1e;letter-spacing:0.350px;">5</span><span class="tx" style="left:199.50px;top:214px;font-size:13px;line-height:16px;color:#231f1e;letter-spacing:0.350px;">6</span><span class="tx" style="left:233.50px;top:213px;font-size:13px;line-height:16px;color:#231f1e;letter-spacing:0.350px;">6</span><span class="tx" style="left:199.50px;top:236px;font-size:13px;line-height:16px;color:#231f1e;letter-spacing:0.350px;">7</span><span class="tx" style="left:233.50px;top:235px;font-size:13px;line-height:16px;color:#231f1e;letter-spacing:0.350px;">7</span><span class="tx" style="left:199.50px;top:258px;font-size:13px;line-height:16px;color:#231f1e;letter-spacing:0.350px;">8</span><span class="tx" style="left:233.50px;top:257px;font-size:13px;line-height:16px;color:#231f1e;letter-spacing:0.350px;">8</span><span class="tx" style="left:333.00px;top:257px;font-size:13px;line-height:16px;color:#231f1e;letter-spacing:0.673px;">3,212550e-01</span><span class="tx" style="left:199.50px;top:280px;font-size:13px;line-height:16px;color:#231f1e;letter-spacing:0.350px;">9</span><span class="tx" style="left:233.50px;top:279px;font-size:13px;line-height:16px;color:#231f1e;letter-spacing:0.350px;">9</span><span class="tx" style="left:333.00px;top:279px;font-size:13px;line-height:16px;color:#231f1e;letter-spacing:0.673px;">3,639762e-01</span><span class="tx" style="left:199.50px;top:302px;font-size:13px;line-height:16px;color:#231f1e;letter-spacing:0.350px;">10</span><span class="tx" style="left:233.50px;top:301px;font-size:13px;line-height:16px;color:#231f1e;letter-spacing:0.350px;">10</span><span class="tx" style="left:333.00px;top:301px;font-size:13px;line-height:16px;color:#231f1e;letter-spacing:0.673px;">1,662393e-01</span><span class="tx" style="left:199.50px;top:324px;font-size:13px;line-height:16px;color:#231f1e;letter-spacing:0.350px;">11</span><span class="tx" style="left:233.50px;top:323px;font-size:13px;line-height:16px;color:#231f1e;letter-spacing:0.350px;">11</span><span class="tx" style="left:333.00px;top:323px;font-size:13px;line-height:16px;color:#231f1e;letter-spacing:0.673px;">8,402110e-01</span><span class="tx" style="left:199.50px;top:346px;font-size:13px;line-height:16px;color:#231f1e;letter-spacing:0.350px;">12</span><span class="tx" style="left:233.50px;top:345px;font-size:13px;line-height:16px;color:#231f1e;letter-spacing:0.350px;">12</span><span class="tx" style="left:333.00px;top:345px;font-size:13px;line-height:16px;color:#231f1e;letter-spacing:0.673px;">4,917656e-01</span><span class="tx" style="left:199.50px;top:368px;font-size:13px;line-height:16px;color:#231f1e;letter-spacing:0.350px;">13</span><span class="tx" style="left:233.50px;top:367px;font-size:13px;line-height:16px;color:#231f1e;letter-spacing:0.350px;">13</span><span class="tx" style="left:333.00px;top:367px;font-size:13px;line-height:16px;color:#231f1e;letter-spacing:0.673px;">6,638568e-01</span><span class="tx" style="left:199.50px;top:390px;font-size:13px;line-height:16px;color:#231f1e;letter-spacing:0.350px;">14</span><span class="tx" style="left:233.50px;top:389px;font-size:13px;line-height:16px;color:#231f1e;letter-spacing:0.350px;">14</span><span class="tx" style="left:333.00px;top:389px;font-size:13px;line-height:16px;color:#231f1e;letter-spacing:0.673px;">3,285612e-01</span><span class="tx" style="left:199.50px;top:412px;font-size:13px;line-height:16px;color:#231f1e;letter-spacing:0.350px;">15</span><span class="tx" style="left:233.50px;top:411px;font-size:13px;line-height:16px;color:#231f1e;letter-spacing:0.350px;">15</span><span class="tx" style="left:333.00px;top:411px;font-size:13px;line-height:16px;color:#231f1e;letter-spacing:0.673px;">8,698721e-01</span><span class="tx" style="left:199.50px;top:434px;font-size:13px;line-height:16px;color:#231f1e;letter-spacing:0.350px;">16</span><span class="tx" style="left:233.50px;top:433px;font-size:13px;line-height:16px;color:#231f1e;letter-spacing:0.350px;">16</span><span class="tx" style="left:333.00px;top:433px;font-size:13px;line-height:16px;color:#231f1e;letter-spacing:0.673px;">9,766645e-01</span><span class="tx" style="left:199.50px;top:456px;font-size:13px;line-height:16px;color:#231f1e;letter-spacing:0.350px;">17</span><span class="tx" style="left:233.50px;top:455px;font-size:13px;line-height:16px;color:#231f1e;letter-spacing:0.350px;">17</span><span class="tx" style="left:333.00px;top:455px;font-size:13px;line-height:16px;color:#231f1e;letter-spacing:0.673px;">1,874005e-01</span><span class="tx" style="left:199.50px;top:478px;font-size:13px;line-height:16px;color:#231f1e;letter-spacing:0.350px;">18</span><span class="tx" style="left:233.50px;top:477px;font-size:13px;line-height:16px;color:#231f1e;letter-spacing:0.350px;">18</span><span class="tx" style="left:333.00px;top:477px;font-size:13px;line-height:16px;color:#231f1e;letter-spacing:0.673px;">7,299066e-01</span><span class="tx" style="left:199.50px;top:500px;font-size:13px;line-height:16px;color:#231f1e;letter-spacing:0.350px;">19</span><span class="tx" style="left:233.50px;top:499px;font-size:13px;line-height:16px;color:#231f1e;letter-spacing:0.350px;">19</span><span class="tx" style="left:333.00px;top:499px;font-size:13px;line-height:16px;color:#231f1e;letter-spacing:0.673px;">6,963921e-01</span><span class="tx" style="left:199.50px;top:522px;font-size:13px;line-height:16px;color:#231f1e;letter-spacing:0.350px;">20</span><span class="tx" style="left:233.50px;top:521px;font-size:13px;line-height:16px;color:#231f1e;letter-spacing:0.350px;">20</span><span class="tx" style="left:333.00px;top:521px;font-size:13px;line-height:16px;color:#231f1e;letter-spacing:0.673px;">7,155805e-01</span><span class="tx" style="left:199.50px;top:544px;font-size:13px;line-height:16px;color:#231f1e;letter-spacing:0.350px;">21</span><span class="tx" style="left:233.50px;top:543px;font-size:13px;line-height:16px;color:#231f1e;letter-spacing:0.350px;">21</span><span class="tx" style="left:333.00px;top:543px;font-size:13px;line-height:16px;color:#231f1e;letter-spacing:0.673px;">5,870939e-01</span><span class="tx" style="left:199.50px;top:566px;font-size:13px;line-height:16px;color:#231f1e;letter-spacing:0.350px;">22</span><span class="tx" style="left:233.50px;top:565px;font-size:13px;line-height:16px;color:#231f1e;letter-spacing:0.350px;">22</span><span class="tx" style="left:333.00px;top:565px;font-size:13px;line-height:16px;color:#231f1e;letter-spacing:0.673px;">8,388767e-01</span><span class="tx" style="left:199.50px;top:588px;font-size:13px;line-height:16px;color:#231f1e;letter-spacing:0.350px;">23</span><span class="tx" style="left:233.50px;top:587px;font-size:13px;line-height:16px;color:#231f1e;letter-spacing:0.350px;">23</span><span class="tx" style="left:333.00px;top:587px;font-size:13px;line-height:16px;color:#231f1e;letter-spacing:0.673px;">2,370343e-01</span><span class="tx" style="left:199.50px;top:610px;font-size:13px;line-height:16px;color:#231f1e;letter-spacing:0.350px;">24</span><span class="tx" style="left:233.50px;top:609px;font-size:13px;line-height:16px;color:#231f1e;letter-spacing:0.350px;">24</span><span class="tx" style="left:333.00px;top:609px;font-size:13px;line-height:16px;color:#231f1e;letter-spacing:0.673px;">1,009136e-01</span><span class="tx" style="left:199.50px;top:632px;font-size:13px;line-height:16px;color:#231f1e;letter-spacing:0.350px;">25</span><span class="tx" style="left:233.50px;top:631px;font-size:13px;line-height:16px;color:#231f1e;letter-spacing:0.350px;">25</span><span class="tx" style="left:333.00px;top:631px;font-size:13px;line-height:16px;color:#231f1e;letter-spacing:0.673px;">4,603804e-02</span><span class="tx" style="left:199.50px;top:654px;font-size:13px;line-height:16px;color:#231f1e;letter-spacing:0.350px;">26</span><span class="tx" style="left:233.50px;top:653px;font-size:13px;line-height:16px;color:#231f1e;letter-spacing:0.350px;">26</span><span class="tx" style="left:333.00px;top:653px;font-size:13px;line-height:16px;color:#231f1e;letter-spacing:0.673px;">2,078515e-01</span><span class="tx" style="left:199.50px;top:676px;font-size:13px;line-height:16px;color:#231f1e;letter-spacing:0.350px;">27</span><span class="tx" style="left:233.50px;top:675px;font-size:13px;line-height:16px;color:#231f1e;letter-spacing:0.350px;">27</span><span class="tx" style="left:333.00px;top:675px;font-size:13px;line-height:16px;color:#231f1e;letter-spacing:0.673px;">9,489090e-01</span><span class="tx" style="left:795.00px;top:76px;font-size:13px;line-height:16px;color:#231f1e;letter-spacing:0.618px;">Project properties</span><span class="tx" style="left:802.00px;top:109px;font-size:13px;line-height:16px;color:#231f1e;letter-spacing:0.250px;">File name</span><span class="tx" style="left:802.00px;top:131px;font-size:13px;line-height:16px;color:#231f1e;letter-spacing:0.536px;">Labplot version</span><span class="tx" style="left:936.00px;top:131px;font-size:13px;line-height:16px;color:#231f1e;letter-spacing:0.500px;">2.0.1</span><span class="tx" style="left:802.00px;top:166px;font-size:13px;line-height:16px;color:#231f1e;letter-spacing:0.667px;">Name</span><span class="tx" style="left:943.00px;top:166px;font-size:13px;line-height:16px;color:#231f1e;letter-spacing:0.667px;">Project</span><span class="tx" style="left:802.00px;top:192px;font-size:13px;line-height:16px;color:#231f1e;letter-spacing:0.900px;">Author</span><span class="tx" style="left:802.00px;top:214px;font-size:13px;line-height:16px;color:#231f1e;letter-spacing:0.667px;">Created</span><span class="tx" style="left:936.00px;top:214px;font-size:13px;line-height:16px;color:#231f1e;letter-spacing:0.630px;">Нд бер. 30 15:22:16 2014</span><span class="tx" style="left:802.00px;top:232px;font-size:13px;line-height:16px;color:#231f1e;letter-spacing:0.542px;">Last modified</span><span class="tx" style="left:936.00px;top:232px;font-size:13px;line-height:16px;color:#231f1e;letter-spacing:0.630px;">Нд бер. 30 15:22:16 2014</span><span class="tx" style="left:802.00px;top:250px;font-size:13px;line-height:16px;color:#231f1e;letter-spacing:0.875px;">Notes</span>
<!-- context menu -->
<div class="a" style="left:63.5px;top:149.5px;width:189px;height:56px;border-radius:5px;background:linear-gradient(#dedad7,#d0cbc8 50%,#c8c3bf);box-shadow:0 1px 3px rgba(0,0,0,.2),0 5px 16px 3px rgba(0,0,0,.12),0 0 0 1px rgba(0,0,0,.06),inset 0 1px 0 rgba(255,255,255,.5)"></div>
<div class="a" style="left:70px;top:155.5px;width:175px;height:19.5px;border-radius:4px;background:linear-gradient(#cec9c5,#c8c3bf);box-shadow:inset 0 1px 1px rgba(0,0,0,.12),0 1px 0 rgba(255,255,255,.45)"></div>
<svg class="a" style="left:72px;top:156px" width="17" height="18" viewBox="0 0 17 18"><path d="M1.5 2.5H11L14.5 6V13L11.5 16.5H1.5Z" fill="#fafafa" stroke="#b5b5b5" stroke-width="0.8"/><path d="M11.5 16.5L12 13.5L14.5 13" fill="#e5e5e5" stroke="#b5b5b5" stroke-width="0.6"/><circle cx="13" cy="4" r="3.3" fill="#2b7a22"/><path d="M13 2V6M11 4H15" stroke="#f7f2a0" stroke-width="1.3"/></svg>
<svg class="a" style="left:72px;top:180px" width="17" height="18" viewBox="0 0 17 18"><rect x="0.5" y="0.5" width="10" height="11" fill="#f4f4f4" stroke="#aaa" stroke-width="0.8"/><rect x="3.5" y="4.5" width="12" height="12" fill="#fcfcfc" stroke="#999" stroke-width="0.8"/><path d="M3.5 6.5H15.5" stroke="#ccc"/></svg>
<svg class="a" style="left:236px;top:160px" width="8" height="10" viewBox="0 0 8 10"><path d="M2 1L6 5L2 9" stroke="#1f1f1f" stroke-width="1.3" fill="none"/></svg>
<svg class="a" style="left:236px;top:183.5px" width="8" height="10" viewBox="0 0 8 10"><path d="M2 1L6 5L2 9" stroke="#1f1f1f" stroke-width="1.3" fill="none"/></svg>
<!-- submenu -->
<div class="a" style="left:244px;top:154px;width:192px;height:108px;border-radius:5px;background:linear-gradient(#dfdbd8,#d0cbc7 55%,#c3bdb9);box-shadow:0 1px 3px rgba(0,0,0,.22),0 5px 18px 3px rgba(0,0,0,.13),0 0 0 1px rgba(0,0,0,.07),inset 0 1px 0 rgba(255,255,255,.55)"></div>
<div class="a" style="left:250px;top:208px;width:179px;height:20px;border-radius:4px;background:#c3bdb9;box-shadow:inset 0 1px 1px rgba(0,0,0,.1),0 1px 0 rgba(255,255,255,.4)"></div>
<div class="a" style="left:250px;top:232px;width:180px;height:1px;background:linear-gradient(to right,rgba(255,255,255,0),rgba(255,255,255,.7) 30%,rgba(255,255,255,.7) 70%,rgba(255,255,255,0));box-shadow:0 -1px 0 rgba(160,155,150,.35)"></div>
<svg class="a" style="left:252px;top:161px" width="17" height="17" viewBox="0 0 17 17"><path d="M0.5 3.5Q0.5 2.5 1.5 2.5H6L7.5 4H15.5V16.5H0.5Z" fill="#4d7fbf" stroke="#2f5a95" stroke-width="0.8"/><rect x="0.8" y="6" width="15.4" height="10.2" fill="#7aa8d8" stroke="#2f5a95" stroke-width="0.8"/><path d="M1 9H16" stroke="#a9c8ea" stroke-width="1"/><circle cx="13" cy="4" r="3.6" fill="#1e6a1e"/><path d="M13 1.8V6.2M10.8 4H15.2" stroke="#fff" stroke-width="1.4"/></svg>
<svg class="a" style="left:252px;top:186px" width="17" height="17" viewBox="0 0 17 17"><rect x="0.5" y="0.5" width="15" height="15" fill="#fafafa"/><path d="M0.5 4.5H15.5M0.5 8H15.5M0.5 11.5H15.5M4.5 0.5V15.5M8 0.5V15.5M11.5 0.5V15.5" stroke="#cfd3d6" stroke-width="0.9"/><rect x="0.5" y="0.5" width="4" height="4" fill="#a9cdee"/><rect x="4.5" y="4.5" width="4" height="3.5" fill="#a9cdee"/><path d="M11 10.5H13.5V13H16V15.5H13.5V18H11V15.5H8.5V13H11Z" fill="#3b8a1a" stroke="#1f5a0a" stroke-width="0.6"/></svg>
<svg class="a" style="left:253px;top:211px" width="15" height="16" viewBox="0 0 15 16"><rect x="0.5" y="0.5" width="13" height="14" fill="#fcfcfc" stroke="#7b7b7b" stroke-width="0.8"/><path d="M10 11.5H12V9.5H13.5V11.5H15.5V13H13.5V15H12V13H10Z" fill="#a5a47a"/></svg>
<svg class="a" style="left:253px;top:238px" width="15" height="17" viewBox="0 0 15 17"><path d="M0.5 0.5H13.5V12L9.5 16.5H0.5Z" fill="#fafafa" stroke="#8a8a8a" stroke-width="0.8"/><rect x="4" y="6" width="3" height="3" fill="#222"/><rect x="8" y="6" width="3" height="3" fill="#555"/><rect x="4" y="10" width="3" height="3" fill="#555"/><path d="M3 3H11" stroke="#bbb" stroke-dasharray="1 1"/></svg>

<span class="tx" style="left:93.00px;top:157px;font-size:13px;line-height:16px;color:#231f1e;letter-spacing:0.333px;">Add new</span><span class="tx" style="left:93.00px;top:181px;font-size:13px;line-height:16px;color:#231f1e;letter-spacing:0.217px;">Window visibility policy</span><span class="tx" style="left:273.00px;top:162px;font-size:13px;line-height:16px;color:#231f1e;letter-spacing:0.500px;">Folder</span><span class="tx" style="left:273.00px;top:186px;font-size:13px;line-height:16px;color:#231f1e;letter-spacing:0.650px;">Spreadsheet</span><span class="tx" style="left:375.00px;top:186px;font-size:13px;line-height:16px;color:#231f1e;letter-spacing:1.100px;">Ctrl+=</span><span class="tx" style="left:273.00px;top:210px;font-size:13px;line-height:16px;color:#231f1e;letter-spacing:0.375px;">Worksheet</span><span class="tx" style="left:383.00px;top:210px;font-size:13px;line-height:16px;color:#231f1e;letter-spacing:0.500px;">Alt+X</span><span class="tx" style="left:273.00px;top:238px;font-size:13px;line-height:16px;color:#231f1e;letter-spacing:0.367px;">File Data Source</span>
</body></html>
